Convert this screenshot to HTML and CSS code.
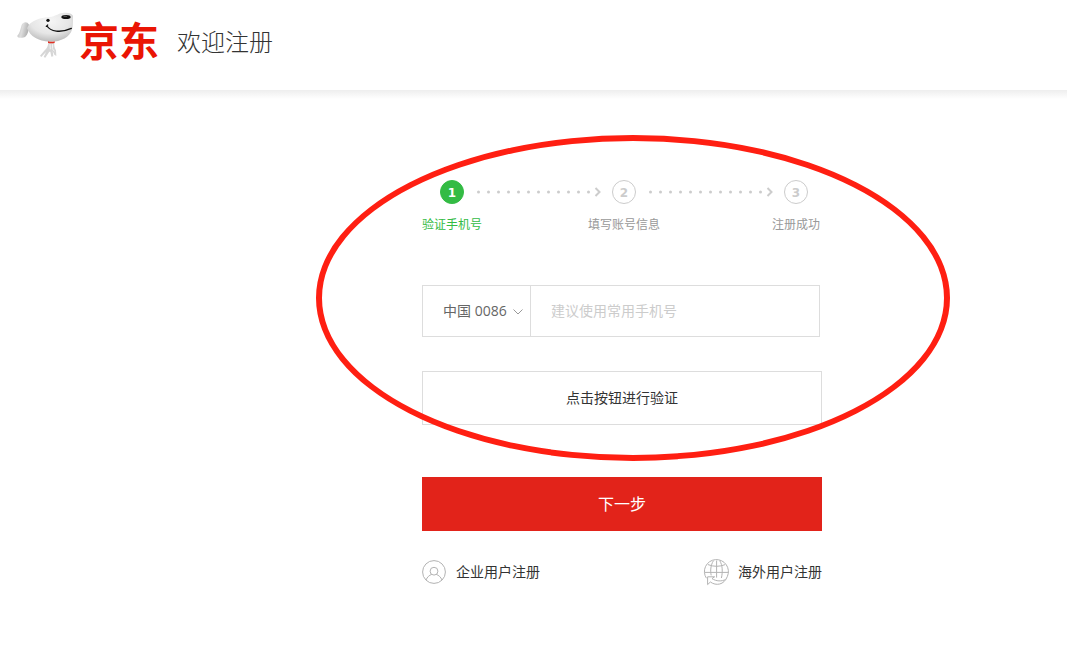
FILE: index.html
```html
<!DOCTYPE html>
<html lang="zh-CN">
<head>
    <meta charset="UTF-8">
    <meta name="viewport" content="width=device-width, initial-scale=1.0">
    <title>欢迎注册</title>
    <link rel="stylesheet" href="styles.css">
</head>
<body>
    <header class="header">
        <a href="#" class="logo">
            <svg class="logo-dog" viewBox="18 21 171 186" aria-hidden="true">
                <defs>
                    <radialGradient id="head" cx="0.5" cy="0.3" r="0.7">
                        <stop offset="0" stop-color="#f6f6f6"/>
                        <stop offset="0.6" stop-color="#e6e6e6"/>
                        <stop offset="1" stop-color="#bdbdbd"/>
                    </radialGradient>
                    <linearGradient id="ear" x1="0" y1="0" x2="1" y2="0.3">
                        <stop offset="0" stop-color="#b5b5b5"/>
                        <stop offset="0.5" stop-color="#dedede"/>
                        <stop offset="1" stop-color="#b0b0b0"/>
                    </linearGradient>
                </defs>
                <!-- paws -->
                <path d="M115 116 L133 116 C132 124 134 132 138 139 L139 156 L133 152 L128 141 L130 157 L124 158 L121 143 L118 143 L106 161 L101 159 L108 144 L94 159 L90 155 L104 139 C111 133 114 126 115 116 Z" fill="#d6d6d6"/>
                <path d="M120 120 L121 136 M128 120 L127 134 L133 142" stroke="#f3f3f3" stroke-width="3" fill="none"/>
                <!-- ear -->
                <path d="M57 62 C52 52 40 52 35 63 C31 77 29 88 22 95 C21 103 39 103 46 98 C54 91 55 82 57 70 Z" fill="url(#ear)"/>
                <!-- head -->
                <path d="M51 73 C60 49 91 41 119 39 C137 37 143 29 157 27 C174 24 190 29 190 39 C188 51 190 64 186 77 C180 99 151 114 119 113 C84 112 61 97 51 73 Z" fill="url(#head)"/>
                <ellipse cx="168" cy="39" rx="14" ry="6" fill="#111"/>
                <ellipse cx="166" cy="37" rx="6" ry="1.5" fill="#666"/>
                <circle cx="114" cy="49" r="5" fill="#111"/>
                <path d="M109 67 Q112 65 113 63 M111 66 C121 82 151 88 184 73" fill="none" stroke="#111" stroke-width="4" stroke-linecap="round"/>
                <path d="M114 112 Q125 115 134 112 L134 117 Q124 119 114 117 Z" fill="#e33022"/>
            </svg>
            <span class="logo-name">京东</span>
        </a>
        <h1 class="title">欢迎注册</h1>
    </header>

    <main class="main">
        <form class="register">
            <ol class="steps">
                <li class="step step-active">
                    <span class="step-num">1</span>
                    <span class="step-text">验证手机号</span>
                </li>
                <li class="step-line" aria-hidden="true">
                    <svg viewBox="0 0 124 24">
                        <path class="dots" d="M1.5 12 H114"/>
                        <path class="tip" d="M118.5 8 L122.5 12 L118.5 16"/>
                    </svg>
                </li>
                <li class="step">
                    <span class="step-num">2</span>
                    <span class="step-text">填写账号信息</span>
                </li>
                <li class="step-line" aria-hidden="true">
                    <svg viewBox="0 0 124 24">
                        <path class="dots" d="M1.5 12 H114"/>
                        <path class="tip" d="M118.5 8 L122.5 12 L118.5 16"/>
                    </svg>
                </li>
                <li class="step">
                    <span class="step-num">3</span>
                    <span class="step-text">注册成功</span>
                </li>
            </ol>

            <div class="phone">
                <div class="country">
                    <select class="country-select" aria-label="中国 0086">
                        <option>中国 0086</option>
                    </select>
                    <svg class="country-arrow" viewBox="0 0 10 6" aria-hidden="true">
                        <path d="M0.5 0.5 L5 5 L9.5 0.5"/>
                    </svg>
                </div>
                <input class="phone-input" type="tel" placeholder="建议使用常用手机号" aria-label="建议使用常用手机号">
            </div>

            <button type="button" class="btn btn-verify">点击按钮进行验证</button>
            <button type="submit" class="btn btn-next">下一步</button>

            <div class="links">
                <a href="#" class="link">
                    <svg class="link-icon" viewBox="0 0 24 24" aria-hidden="true">
                        <circle cx="12" cy="12" r="11.4"/>
                        <circle cx="12" cy="11.2" r="3.9"/>
                        <path d="M4 20 C5.2 17.2 7.2 15.2 9.7 14.4 M14.3 14.4 C16.8 15.2 18.8 17.2 20 20"/>
                    </svg>
                    企业用户注册
                </a>
                <a href="#" class="link">
                    <svg class="link-icon" viewBox="0 0 24 24" aria-hidden="true">
                        <path d="M2.4 18.2 A12 12 0 1 1 23.4 16.4"/>
                        <path d="M0.6 12.4 H24.6 M4 4.6 Q12.6 8 21.2 4.6"/>
                        <path d="M9.4 0.8 C6.6 5 6.2 11 7.2 15.4 M15.8 0.8 C18.6 5.2 18.8 12 17.4 18 M12.6 0.6 V17.6"/>
                        <path d="M10.6 16.8 H3.6 V24.6 L6.4 22 M3.6 16.8 M6.4 22 C12 26 20 25.2 23.4 16.4 M8 18.6 C12 21.4 18 21.6 21.6 19.4 M8 18.6 L10.6 16.8"/>
                    </svg>
                    海外用户注册
                </a>
            </div>

            <!-- highlight ring over the part to fill in -->
            <div class="ring"></div>
        </form>
    </main>
</body>
</html>
```

FILE: styles.css
```css
* {
    box-sizing: border-box;
}

body {
    margin: 0;
    font-family: "Open Sans", "Noto Sans CJK SC", sans-serif;
    font-size: 14px;
    color: #333;
    background: #fff;
}

.header {
    display: flex;
    align-items: center;
    height: 90px;
    padding: 0 16px 8px;
}

.logo {
    display: flex;
    align-items: center;
    gap: 6px;
    margin-right: 18px;
    text-decoration: none;
}

.logo-dog {
    width: 57px;
    height: 62px;
    margin-top: 2px;
}

.logo-name {
    padding-bottom: 4px;
    font-family: "Noto Sans CJK SC", sans-serif;
    font-size: 40px;
    font-weight: 700;
    line-height: 40px;
    color: #ea1504;
}

.title {
    margin: 0;
    font-family: "Noto Sans CJK SC", sans-serif;
    font-size: 24px;
    font-weight: 300;
    line-height: 36px;
}

.main {
    padding: 90px 0 60px 177px;
    background: linear-gradient(#eee, #fff) no-repeat;
    background-size: 100% 9px;
}

.register {
    position: relative;
    width: 400px;
    margin: 0 auto;
}

/* steps */
.steps {
    display: flex;
    margin: 0 -4px 0 0;
    padding: 0;
    list-style: none;
}

.step {
    display: flex;
    flex-direction: column;
    align-items: center;
    width: 60px;
    color: #999;
}

.step-num {
    width: 24px;
    height: 24px;
    border: 1px solid #ccc;
    border-radius: 50%;
    font-family: "DejaVu Sans", sans-serif;
    font-size: 12px;
    font-weight: 700;
    line-height: 24px;
    text-align: center;
    color: #ccc;
}

.step-text {
    margin-top: 11px;
    font-size: 12px;
    line-height: 20px;
    white-space: nowrap;
}

.step-active {
    color: #3b4;
}

.step-active .step-num {
    border-color: #3b4;
    background: #3b4;
    color: #fff;
}

.step-line {
    flex: 1;
    margin: 0 -7px 0 -5px;
}

.step-line svg {
    display: block;
    width: 124px;
    height: 24px;
    fill: none;
    stroke: #ccc;
}

.dots {
    stroke-width: 3;
    stroke-linecap: round;
    stroke-dasharray: 0 10;
}

.tip {
    stroke-width: 2;
}

/* phone row */
.phone {
    display: flex;
    height: 52px;
    margin: 50px 2px 34px 0;
    border: 1px solid #ddd;
}

.country {
    position: relative;
    width: 108px;
    border-right: 1px solid #ddd;
}

.country-select {
    width: 100%;
    height: 100%;
    padding: 0 0 2px 20px;
    border: 0;
    appearance: none;
    background: transparent;
    font: inherit;
    color: #666;
}

.country-arrow {
    position: absolute;
    top: 23px;
    right: 7px;
    width: 10px;
    height: 6px;
    fill: none;
    stroke: #999;
    pointer-events: none;
}

.phone-input {
    flex: 1;
    min-width: 0;
    padding: 0 20px 2px;
    border: 0;
    background: transparent;
    font: inherit;
    color: #666;
}

.phone-input::placeholder {
    color: #ccc;
}

/* buttons */
.btn {
    display: block;
    width: 100%;
    height: 54px;
    padding: 0 0 2px;
    font-family: inherit;
    cursor: pointer;
}

.btn-verify {
    margin-bottom: 52px;
    border: 1px solid #ddd;
    background: #fff;
    font-size: 14px;
    color: #333;
}

.btn-next {
    border: 0;
    background: #e2231a;
    font-size: 16px;
    color: #fff;
}

.links {
    display: flex;
    justify-content: space-between;
    margin-top: 29px;
}

.link {
    display: flex;
    align-items: center;
    gap: 10px;
    line-height: 24px;
    color: #333;
    text-decoration: none;
}

.link:hover {
    color: #e2231a;
}

.link-icon {
    width: 24px;
    height: 24px;
    overflow: visible;
    fill: none;
    stroke: #b3b3b3;
}

.ring {
    position: absolute;
    top: -45px;
    left: -106px;
    width: 634px;
    height: 326px;
    border: 6px solid #ff1f12;
    border-radius: 50%;
    pointer-events: none;
}
```
